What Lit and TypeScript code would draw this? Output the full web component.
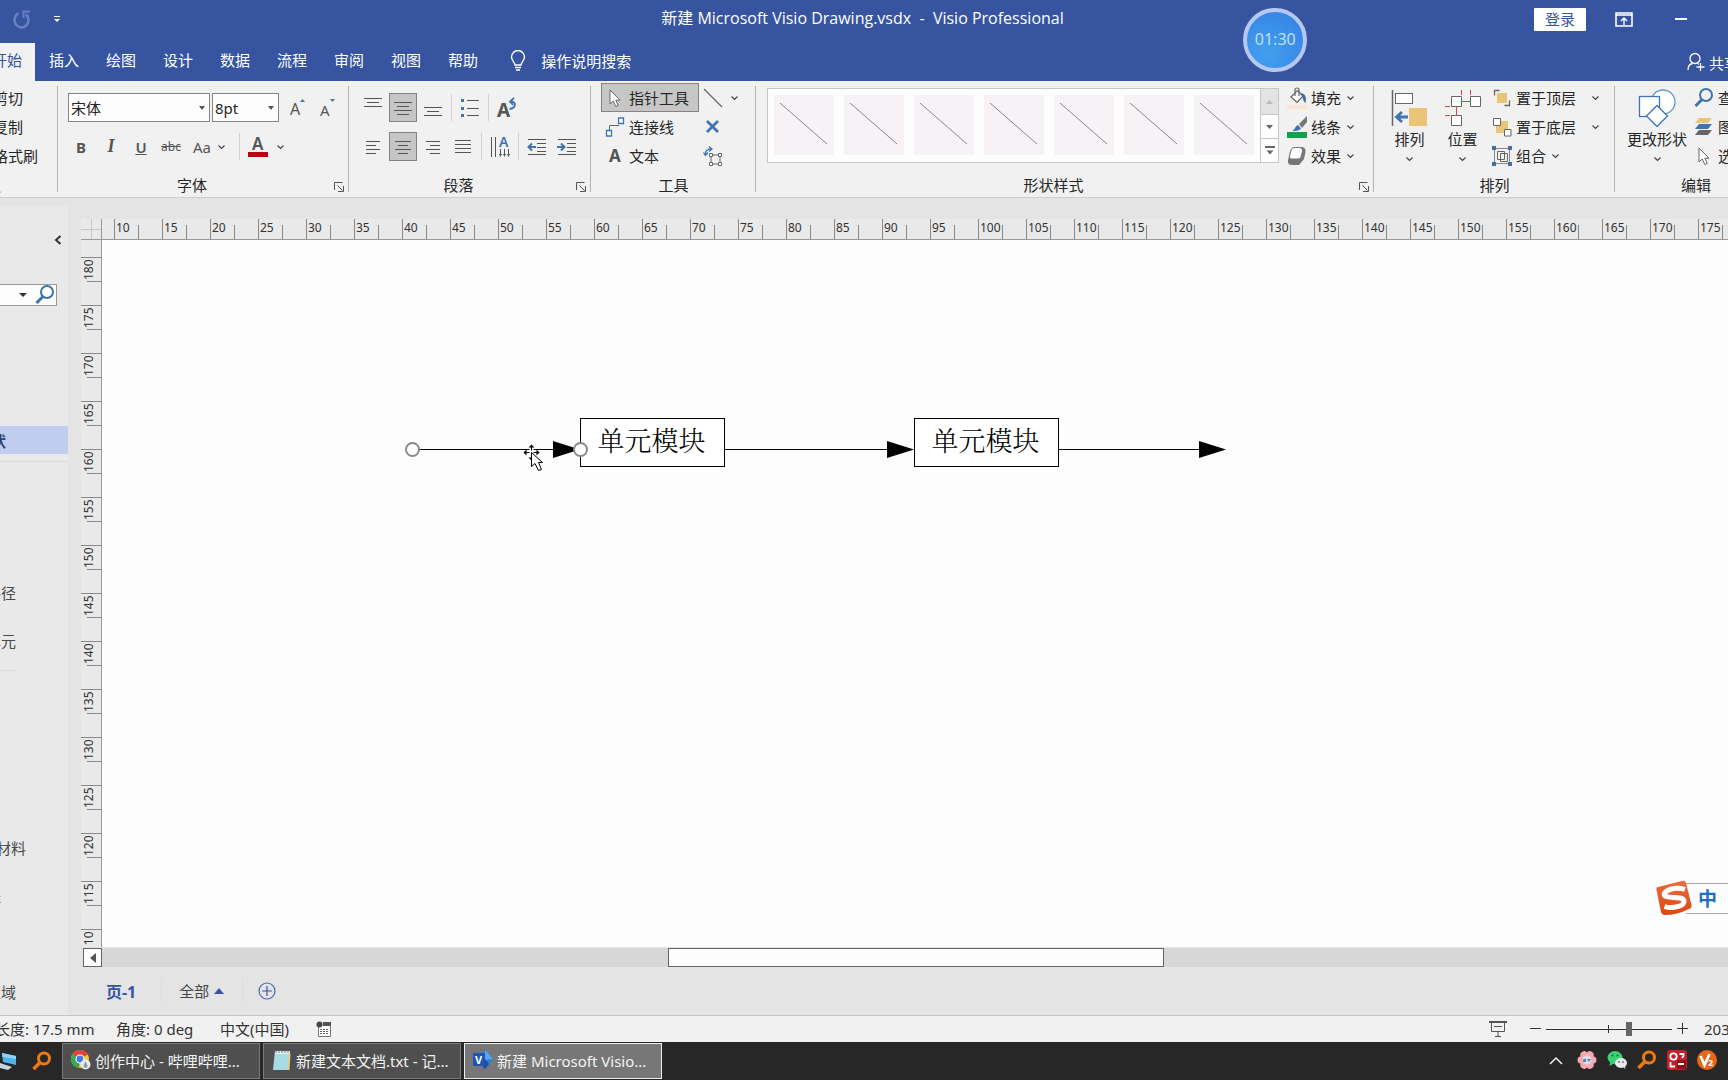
import { LitElement, html, css, svg } from "lit";
import { customElement, property } from "lit/decorators.js";

const chev = html`<svg class="chev" width="9" height="6" viewBox="0 0 9 6"><path d="M1.5 1.5 4.5 4.5 7.5 1.5" fill="none" stroke="#444" stroke-width="1.2"/></svg>`;

const lines = (rows: number[][]) =>
  svg`${rows.map(([x1, x2, y]) => svg`<path d="M${x1} ${y + 0.5}H${x2}" stroke="#555"/>`)}`;

const icon = (w: number, h: number, body: unknown) =>
  html`<svg width=${w} height=${h} viewBox="0 0 ${w} ${h}" aria-hidden="true">${body}</svg>`;

const searchPath = (c: string, w = 2) =>
  svg`<circle cx="12" cy="7" r="6" fill="none" stroke=${c} stroke-width=${w}/><path d="M8 11.5 1.5 18" stroke=${c} stroke-width=${w + 1}/>`;

const pointer = svg`<path d="M2 1V15L5.2 12 7.8 17.5 10.2 16.4 7.8 11.2H12Z" fill="#fff" stroke="#666"/>`;

const icons = {
  undo: icon(18, 20, svg`<path d="M5.5 4.2A7 7.5 0 1 0 13 5.2" fill="none" stroke="#6780c2" stroke-width="2.6"/><path d="M8 1.5H17V3.5H11.5V9H9.5V1.5" fill="#6780c2"/>`),
  custom: icon(8, 8, svg`<path d="M1 1.5H7" stroke="#fff"/><path d="M1 4H7L4 7Z" fill="#fff"/>`),
  bulb: icon(16, 22, svg`<path d="M5 15C5 12 1.5 11 1.5 7A6.3 6.3 0 0 1 14.5 7C14.5 11 11 12 11 15Z" fill="none" stroke="#fff" stroke-width="1.4"/><path d="M5 17.5H11M6 20H10" stroke="#fff" stroke-width="1.6"/>`),
  share: icon(18, 20, svg`<circle cx="8" cy="6.500" r="5" fill="none" stroke="#fff" stroke-width="1.3"/><path d="M1 18C1 14 3 12 5.500 11.500M10.500 11.500 12 12.300M13.500 11V19M9.500 15H17.500" fill="none" stroke="#fff" stroke-width="1.3"/>`),
  ribbonMode: icon(18, 15, svg`<path d="M1 1H17V14H1ZM1 3H17" fill="none" stroke="#fff" stroke-width="1.6"/><path d="M9 13V6M6 9 9 6 12 9" fill="none" stroke="#fff" stroke-width="1.4"/>`),
  launcher: icon(10, 10, svg`<path d="M.5 8V.5H8.500M3.500 3.500 8.500 8.500M9.500 4V9.500H4" fill="none" stroke="#555"/>`),
  grow: icon(16, 20, svg`<text x="0" y="17" font-size="16" fill="#555">A</text><path d="M10 4 12.500 1 15 4Z" fill="#3f74b0"/>`),
  shrink: icon(16, 20, svg`<text x="0" y="18" font-size="15" fill="#555">A</text><path d="M10 1H15L12.500 4Z" fill="#3f74b0"/>`),
  fontColor: icon(20, 22, svg`<text x="4" y="14" font-size="17" font-weight="600" fill="#555">A</text><rect y="16" width="20" height="5" fill="#b7060f"/>`),
  top: icon(18, 20, lines([[0, 18, 0], [3, 15, 4], [0, 18, 8]])),
  middle: icon(18, 20, lines([[0, 18, 4], [3, 15, 8], [0, 18, 12], [3, 15, 16]])),
  bottom: icon(18, 20, lines([[0, 18, 9], [3, 15, 13], [0, 18, 17]])),
  left: icon(16, 20, lines([[1, 15, 4], [1, 11, 8], [1, 15, 12], [1, 11, 16]])),
  center: icon(18, 20, lines([[1, 17, 4], [4, 14, 8], [1, 17, 12], [4, 14, 16]])),
  right: icon(16, 20, lines([[1, 15, 4], [5, 15, 8], [1, 15, 12], [5, 15, 16]])),
  justify: icon(18, 20, lines([[1, 17, 3], [1, 17, 7], [1, 17, 11], [1, 17, 15]])),
  bullets: icon(20, 20, svg`${lines([[7, 19, 2], [7, 19, 10], [7, 19, 17]])}<path d="M1 1H4V4H1ZM1 9H4V12H1ZM1 16H4V19H1Z" fill="#3f74b0"/>`),
  rotate: icon(20, 22, svg`<text x="0" y="20" font-size="19" font-weight="700" fill="#555">A</text><path d="M12.500 12C19 11 19.500 5.500 14.500 4.500M17 1 13 4.500 16 8" fill="none" stroke="#3f74b0" stroke-width="1.800"/>`),
  vertical: icon(20, 22, svg`<path d="M1.500 1V21M5.500 1V21M10.500 13V19M14.500 13V19M18.500 13V19" stroke="#555"/><path d="M9 18H12L10.500 21ZM13 18H16L14.500 21ZM17 18H20L18.500 21Z" fill="#555"/><text x="9" y="11" font-size="14" font-weight="600" fill="#3f74b0">A</text>`),
  outdent: icon(20, 20, svg`${lines([[1, 19, 2], [10, 19, 6], [10, 19, 10], [10, 19, 14], [1, 19, 17]])}<path d="M9 10H2M5 6.500 1.500 10 5 13.500" fill="none" stroke="#3f74b0" stroke-width="2"/>`),
  indent: icon(20, 20, svg`${lines([[1, 19, 2], [10, 19, 6], [10, 19, 10], [10, 19, 14], [1, 19, 17]])}<path d="M0 10H7M4 6.500 7.500 10 4 13.500" fill="none" stroke="#3f74b0" stroke-width="2"/>`),
  pointer: icon(20, 20, svg`<g transform="translate(3 1)">${pointer}</g>`),
  connector: icon(20, 20, svg`<path d="M4.500 13V8.500H14" fill="none" stroke="#666"/><path d="M1.500 13.500H6.500V19H1.500ZM13.500 1H18.500V6.500H13.500Z" fill="#fff" stroke="#3f74b0" stroke-width="1.300"/>`),
  text: icon(20, 20, svg`<text x="4" y="16" font-size="17" font-weight="700" fill="#555">A</text>`),
  line: icon(20, 20, svg`<path d="M1 1 19 19" stroke="#666" stroke-width="1.200"/>`),
  cross: icon(20, 20, svg`<path d="M4 4 15 15M15 4 4 15" stroke="#3f74b0" stroke-width="2.800"/>`),
  crop: icon(20, 20, svg`<path d="M8 9H17V18H8Z" fill="none" stroke="#666"/><path d="M6.500 7.500H9.500V10.500H6.500ZM15.500 7.500H18.500V10.500H15.500ZM6.500 16.500H9.500V19.500H6.500ZM15.500 16.500H18.500V19.500H15.500Z" fill="#fff" stroke="#666"/><path d="M2.500 9C2 5 4 3 8 3M6 .5 9 3 6 5.500M.5 6.500 2.500 9.500 5 6.500" fill="none" stroke="#3f74b0" stroke-width="1.300"/>`),
  fill: icon(20, 22, svg`<path d="M4 10 10.500 3.500 16 9 10 15.500Z" fill="#fff" stroke="#666" stroke-width="1.200"/><path d="M8 9V3A2 2 0 0 1 12 3V9" fill="none" stroke="#666" stroke-width="1.200"/><path d="M13 6C18 6 20 10 18.500 16 16 14.500 16 11 15 9Z" fill="#3f6f9f"/><rect y="18" width="20" height="4" fill="#fde4d0"/>`),
  stroke: icon(20, 22, svg`<path d="M20 0 12 8 15 12 20 6Z" fill="#777"/><path d="M11 9 14 12.500C12 15 8 15 5 15 8 14 8 10 11 9Z" fill="#3f74b0"/><rect y="16" width="20" height="6" fill="#12a14b"/>`),
  effect: icon(20, 20, svg`<path d="M6 1H14Q19 1 18.500 6L17 13 12 19H5Q0 19 1 14L3 6Z" fill="#777"/><path d="M7 1.500H13Q16 2 15.500 5L14 11Q13.500 13 11 13H4Q2 13 2.500 10L4 4Q4.500 2 7 1.500Z" fill="#fff" stroke="#777"/>`),
  align: icon(38, 38, svg`<path d="M1.500 1V37" stroke="#666" stroke-width="1.500"/><rect x="4.500" y="4.500" width="17" height="10" fill="#fff" stroke="#666"/><rect x="18" y="19" width="18" height="18" fill="#eac578"/><path d="M17 28H7M11 23 5.500 28 11 33" fill="none" stroke="#3f74b0" stroke-width="2.800"/>`),
  position: icon(38, 38, svg`<path d="M17.500 1V6M26.500 1V6M17 12.500H26M1 17.500H6M1 26.500H6M12.500 18V26" stroke="#d9434a"/><path d="M7.500 7.500H17.500V17.500H7.500ZM26.500 7.500H36.500V17.500H26.500ZM7.500 26.500H17.500V36.500H7.500Z" fill="#fff" stroke="#666"/>`),
  front: icon(20, 20, svg`<path d="M2.500 7.500V2.500H7.500M17.500 12.500V17.500H12.500" fill="none" stroke="#666" stroke-width="1.300"/><rect x="5" y="5" width="10" height="10" fill="#eac578"/>`),
  back: icon(20, 20, svg`<rect x="4" y="4" width="12" height="12" fill="#eac578"/><path d="M1.500 1.500H8.500V8.500H1.500ZM12.500 12.500H19V19H12.500Z" fill="#fff" stroke="#666"/>`),
  group: icon(20, 20, svg`<path d="M2.500 2.500H17.500V17.500H2.500Z" fill="none" stroke="#888"/><path d="M5.500 5.500H12.500V13.500H5.500ZM8.500 7.500H15.500V15.500H8.500Z" fill="none" stroke="#666"/><path d="M0 0H4V4H0ZM16 0H20V4H16ZM0 16H4V20H0ZM16 16H20V20H16Z" fill="#4a6f9c"/>`),
  change: icon(38, 38, svg`<circle cx="25" cy="13" r="12" fill="#fff" stroke="#6a9ac9" stroke-width="1.300"/><rect x="1.500" y="7.500" width="20" height="20" fill="#fff" stroke="#3f74b0" stroke-width="1.300"/><path d="M19 16.500 29.500 27 19 37.500 8.500 27Z" fill="#fff" stroke="#3f74b0" stroke-width="1.300"/>`),
  find: icon(20, 20, searchPath("#3f74a8", 2)),
  layers: icon(20, 20, svg`<path d="M5 1H18L14 6H1Z" fill="#eac578"/><path d="M5 7H18L14 12H1Z" fill="#3f74b0"/><path d="M5 13H18L14 18H1Z" fill="#666"/>`),
  present: icon(18, 18, svg`<path d="M0 2H18" stroke="#555" stroke-width="2"/><path d="M2.500 3V11.500H15.500V3M5 6.500H13M9 12V16M6 16.500H12" fill="none" stroke="#555"/>`),
  macro: icon(16, 16, svg`<path d="M2.500 4V15.500H14.500V4" fill="#fff" stroke="#777"/><rect x="7" y="1" width="8" height="4" fill="#555"/><circle cx="3.500" cy="3.500" r="3" fill="#444"/><path d="M4 8.500H13M4 10.500H13M4 12.500H13" stroke="#666" stroke-dasharray="2 1"/>`),
  orangeSearch: icon(20, 20, svg`<circle cx="12" cy="7.500" r="5.500" fill="none" stroke="#f07a12" stroke-width="3"/><path d="M8 11.500 1.500 18" stroke="#f07a12" stroke-width="3.500"/>`),
  computer: icon(20, 20, svg`<path d="M2 2 16 5V14L3 11Z" fill="#4fb4ea"/><path d="M2 2 16 5V8L2.500 6Z" fill="#8fd4f5"/><path d="M0 12 12 16 8 19 0 17Z" fill="#c9d6df"/>`),
  chrome: icon(20, 20, svg`<circle cx="9" cy="9" r="9" fill="#f7c52c"/><path d="M9 9 1.200 4.500A9 9 0 0 1 16.800 4.500Z" fill="#e24436"/><path d="M9 9 1.200 4.500A9 9 0 0 0 8 18Z" fill="#36a852"/><circle cx="9" cy="9" r="4.500" fill="#fff"/><circle cx="9" cy="9" r="3.400" fill="#3f7be8"/><circle cx="14.500" cy="14.500" r="5" fill="#e8ecee"/><path d="M14.500 11C13.500 14 12.500 14.500 12.500 16A2 2 0 0 0 16.500 16C16.500 14.500 15.500 14 14.500 11Z" fill="#8aa0ad"/>`),
  notepad: icon(20, 22, svg`<path d="M3 2H18L16 21H1Z" fill="#a9dbe4"/><path d="M3 2H18V5H3Z" fill="#e8eef0"/><path d="M4 1V4M7 1V4M10 1V4M13 1V4M16 1V4" stroke="#777"/><path d="M17 5 18.500 5 17.500 21 15 21Z" fill="#e6cd83"/>`),
  visio: icon(20, 22, svg`<path d="M12 1 20 10 12 20 4 10Z" fill="#2f7de0"/><path d="M12 1 20 10 12 11Z" fill="#55a6f5"/><path d="M4 10 12 20 16 15 12 10Z" fill="#174ea8"/><rect y="4" width="12" height="13" rx="1" fill="#1d55b4"/><text x="2" y="15" font-size="11" font-weight="700" fill="#fff">V</text>`),
  flower: icon(20, 20, svg`${[0, 60, 120, 180, 240, 300].map((a) => svg`<ellipse cx="10" cy="4.500" rx="3.800" ry="4" transform="rotate(${a + 30} 10 10)" fill="#f3aab1"/>`)}<circle cx="10" cy="10" r="4.500" fill="#e9d8ea"/><path d="M6 9.500 9 8.500V12H6ZM10 9H14L12 12Z" fill="#4d86c6"/>`),
  wechat: icon(20, 20, svg`<ellipse cx="8" cy="7.500" rx="7.500" ry="6.500" fill="#3bd072"/><path d="M3 12 2.500 16 7 13.500Z" fill="#3bd072"/><ellipse cx="14" cy="13" rx="6" ry="5" fill="#e6eae8"/><path d="M16 17 18.500 19 18 16Z" fill="#e6eae8"/><circle cx="5.500" cy="5.500" r="1" fill="#1a5c36"/><circle cx="10.500" cy="5.500" r="1" fill="#1a5c36"/><circle cx="12" cy="12" r="1" fill="#777"/><circle cx="16" cy="12" r="1" fill="#777"/>`),
  red: icon(20, 20, svg`<rect width="20" height="20" rx="3" fill="#c81e2b"/><rect x="10" y="10" width="9" height="9" fill="#8f0d18"/><circle cx="6.500" cy="6.500" r="3.200" fill="none" stroke="#fff" stroke-width="1.800"/><path d="M12.500 4H16.500V6L15 8M3.500 12V16.500H8M11 14H17" fill="none" stroke="#fff" stroke-width="1.800"/>`),
  v2: icon(20, 20, svg`<circle cx="10" cy="10" r="10" fill="#e8661a"/><path d="M3.500 6 7.500 15 12.500 4" fill="none" stroke="#fff" stroke-width="2.600"/><text x="11" y="16" font-size="9" font-weight="700" fill="#fff">2</text>`),
  sogou: icon(38, 36, svg`<defs><linearGradient id="sg" x1="0" y1="0" x2="0" y2="1"><stop offset="0" stop-color="#ee6a3f"/><stop offset="1" stop-color="#d94a12"/></linearGradient></defs><path d="M3 7Q1 7 1.500 10L6 32Q7 35 10 35 22 35 34 29 37 28 36.500 25L31 3Q30 0 27 1 15 4 3 7Z" fill="url(#sg)"/><path d="M30 9.500C20 6 7 11 9.500 15.500 12 19 27 15.500 29 20.500 30 26.500 17 29 9.500 26.500" fill="none" stroke="#fff" stroke-width="5"/>`),
};

const base = css`
  * { box-sizing: border-box; }
  button { font: inherit; color: inherit; background: none; border: 0; padding: 0; margin: 0; white-space: nowrap; }
  svg { display: block; flex: none; }
`;

@customElement("visio-title")
class VisioTitle extends LitElement {
  static styles = [base, css`
    :host { display: block; background: #36549f; color: #fff; position: relative; }
    .bar { display: flex; align-items: center; height: 38px; }
    .mini { display: flex; align-items: center; gap: 22px; flex: 1 1 0; padding-left: 13px; }
    .name { font-family: "Open Sans", "Noto Sans CJK SC", sans-serif; font-size: 16px; line-height: 20px; margin: 0; padding-bottom: 2px; font-weight: 400; white-space: pre; flex: none; }
    .right { flex: 1 1 0; display: flex; align-items: center; justify-content: flex-end; gap: 29px; padding-right: 16px; }
    .login { background: #fff; color: #36549f; width: 52px; height: 23px; line-height: 22px; border-radius: 1px; font-size: 15px; }
    .min { padding: 8px 25px 8px 13px; }
    .timer { position: absolute; left: 73.8%; top: 8px; margin-left: -32px; width: 64px; height: 64px; border-radius: 50%; border: 4px solid #b4c8f0; background: radial-gradient(circle at 35% 75%, #41a0ee, #357fe4); font-size: 16px; color: #c5dcf6; display: flex; align-items: center; justify-content: center; padding-bottom: 2px; }
    .tabs { display: flex; height: 43px; gap: 27px; padding-top: 5px; font-size: 15px; }
    .tab { height: 38px; padding-bottom: 6px; }
    .active { background: #f1f1f1; color: #36549f; width: 35px; margin-right: -13px; overflow: hidden; display: flex; align-items: center; }
    .active span { margin-left: -8px; }
    .tell { display: flex; align-items: center; gap: 15px; margin-left: 5px; padding-bottom: 3px; }
    .share { display: flex; align-items: center; gap: 4px; margin-left: auto; width: 41px; overflow: hidden; flex: none; }
  `];
  render() {
    return html`
      <div class="bar">
        <div class="mini"><button aria-label="重复">${icons.undo}</button><button aria-label="自定义">${icons.custom}</button></div>
        <h1 class="name">新建 Microsoft Visio Drawing.vsdx  -  Visio Professional</h1>
        <div class="right">
          <button class="login">登录</button>
          <button aria-label="功能区">${icons.ribbonMode}</button>
          <button class="min" aria-label="最小化">${icon(12, 2, svg`<rect width="12" height="2" fill="#fff"/>`)}</button>
        </div>
      </div>
      <nav class="tabs">
        <button class="tab active"><span>开始</span></button>
        ${["插入", "绘图", "设计", "数据", "流程", "审阅", "视图", "帮助"].map((t) => html`<button class="tab">${t}</button>`)}
        <button class="tell">${icons.bulb}操作说明搜索</button>
        <button class="share">${icons.share}共享</button>
      </nav>
      <div class="timer">01:30</div>
    `;
  }
}

@customElement("visio-ribbon")
class VisioRibbon extends LitElement {
  static styles = [base, css`
    :host { display: flex; height: 117px; background: #f1f1f1; border-bottom: 1px solid #cdcdcd; font-size: 15px; color: #262626; overflow: hidden; }
    .group { flex: none; display: grid; grid-template-rows: 87px 20px; padding: 2px 0 6px; position: relative; }
    .group::after { content: ""; width: 1px; background: #b4b4b4; position: absolute; right: 0; top: 5px; bottom: 5px; }
    .foot { display: flex; align-items: center; justify-content: center; padding-top: 2px; height: 28px; line-height: 20px; }
    .foot .cap { flex: 1; text-align: center; margin-right: 8px; }
    .foot.plain .cap { margin-right: 0; }
    .launch { padding: 4px 5px 0 0; }
    .clip { width: 58px; overflow: hidden; }
    .clip .col { margin-left: -7px; }
    .clip .foot { margin-left: -44px; justify-content: flex-start; }
    .clip .cap { text-align: left; }
    .col { display: grid; grid-template-rows: repeat(3, 29px); justify-items: start; }
    .item { display: flex; align-items: center; gap: 4px; height: 29px; }
    .item .chev { margin-left: 1px; }
    .font { width: 291px; }
    .para { width: 242px; }
    .tools { width: 165px; }
    .styles { flex: 1 0 618px; }
    .arrange { width: 241px; }
    .edit { width: 162px; }
    .rows { display: grid; grid-template-rows: 29px 29px; row-gap: 10px; padding: 10px 0 0 10px; }
    .para .rows { padding-left: 9px; }
    .row { display: flex; align-items: center; }
    .chars { margin-left: -2px; }
    .box { display: flex; position: relative; height: 29px; }
    select { appearance: none; font: inherit; color: inherit; border: 1px solid #858585; border-radius: 0; background: #fdfdfd; height: 29px; width: 100%; padding: 0 0 0 2px; margin: 0; }
    .face { width: 142px; }
    .size { width: 67px; margin: 0 4px 0 2px; }
    .box::after { content: ""; position: absolute; right: 5px; top: 13px; border: 3px solid transparent; border-top: 4px solid #555; border-bottom: 0; }
    .b { width: 30px; height: 29px; display: flex; align-items: center; justify-content: center; color: #555; }
    .on { background: #c6c6c6; border: 1px solid #8a8082; width: 28px; margin: 0 1px; }
    .sep { width: 1px; height: 27px; background: #d2d2d2; margin: 0 3px; }
    .bold { font-weight: 700; }
    .ital { font-family: "Liberation Serif", serif; font-style: italic; font-weight: 700; font-size: 18px; }
    .under { text-decoration: underline; font-weight: 600; }
    .strike { text-decoration: line-through; font-size: 12px; }
    .case { gap: 6px; width: 50px; justify-content: flex-start; padding-left: 7px; }
    .color { gap: 8px; width: 48px; justify-content: flex-start; padding-left: 5px; }
    .toolgrid { display: grid; grid-template-columns: 98px 1fr; grid-template-rows: repeat(3, 29px); padding-left: 10px; }
    .toolgrid .item { padding-left: 4px; }
    .toolgrid .alt { gap: 6px; }
    .item.press { background: #c6c6c6; border: 1px solid #8a8082; padding-left: 3px; width: 98px; }
    .stylebar { display: flex; padding-left: 11px; }
    .gallery { display: flex; gap: 10px; flex: 1; background: #fdfdfd; border: 1px solid #c6c6c6; height: 75px; margin-top: 5px; padding: 6px; }
    .cell { flex: 1; height: 60px; background: #f6f2f6; display: flex; align-items: center; justify-content: center; }
    .spin { display: grid; grid-template-rows: 27px 24px 24px; width: 19px; margin: 5px 8px 0 -1px; }
    .spin button { border: 1px solid #c6c6c6; background: #fdfdfd; display: flex; align-items: center; justify-content: center; margin-top: -1px; }
    .spin button:first-child { background: #e3e3e3; margin: 0; }
    .effects { width: 87px; }
    .bigs { display: flex; }
    .big { display: flex; flex-direction: column; align-items: center; height: 87px; padding-top: 6px; line-height: 24px; width: 53px; }
    .big .chev { margin-top: 5px; }
    .arrange .bigs { padding-left: 9px; }
    .arrange .col { margin-left: 3px; }
    .item.wide .chev { margin-left: 11px; }
    .edit .big { width: 62px; margin-left: 11px; }
    .edit .col { margin-left: 6px; }
  `];
  private foot(label: string, launch = false) {
    return html`<div class="foot ${launch ? "" : "plain"}"><span class="cap">${label}</span>${launch ? html`<button class="launch" aria-label="${label}设置">${icons.launcher}</button>` : ""}</div>`;
  }
  private b(label: string, body: unknown, cls = "") {
    return html`<button class="b ${cls}" aria-label=${label}>${body}</button>`;
  }
  render() {
    return html`
      <section class="group clip">
        <div class="col">${["剪切", "复制", "格式刷"].map((t) => html`<button class="item">${t}</button>`)}</div>
        ${this.foot("剪贴板")}
      </section>
      <section class="group font">
        <div class="rows">
          <div class="row">
            <label class="box face"><select aria-label="字体"><option>宋体</option></select></label>
            <label class="box size"><select aria-label="字号"><option>8pt</option></select></label>
            ${this.b("增大字号", icons.grow)}${this.b("减小字号", icons.shrink)}
          </div>
          <div class="row chars">
            ${this.b("加粗", "B", "bold")}${this.b("倾斜", "I", "ital")}${this.b("下划线", "U", "under")}${this.b("删除线", "abc", "strike")}
            ${this.b("更改大小写", html`Aa${chev}`, "case")}<span class="sep"></span>${this.b("字体颜色", html`${icons.fontColor}${chev}`, "color")}
          </div>
        </div>
        ${this.foot("字体", true)}
      </section>
      <section class="group para">
        <div class="rows">
          <div class="row">
            ${this.b("顶端对齐", icons.top)}${this.b("中部对齐", icons.middle, "on")}${this.b("底端对齐", icons.bottom)}<span class="sep"></span>
            ${this.b("项目符号", icons.bullets)}<span class="sep"></span>${this.b("旋转文本", icons.rotate)}
          </div>
          <div class="row">
            ${this.b("左对齐", icons.left)}${this.b("居中", icons.center, "on")}${this.b("右对齐", icons.right)}${this.b("两端对齐", icons.justify)}<span class="sep"></span>
            ${this.b("文字方向", icons.vertical)}<span class="sep"></span>${this.b("减少缩进", icons.outdent)}${this.b("增加缩进", icons.indent)}
          </div>
        </div>
        ${this.foot("段落", true)}
      </section>
      <section class="group tools">
        <div class="toolgrid">
          <button class="item press">${icons.pointer}指针工具</button><button class="item alt" aria-label="线条">${icons.line}${chev}</button>
          <button class="item">${icons.connector}连接线</button><button class="item alt" aria-label="连接点">${icons.cross}</button>
          <button class="item">${icons.text}文本</button><button class="item alt" aria-label="文本块">${icons.crop}</button>
        </div>
        ${this.foot("工具")}
      </section>
      <section class="group styles">
        <div class="stylebar">
          <div class="gallery">
            ${[1, 2, 3, 4, 5, 6, 7].map((n) => html`<button class="cell" aria-label="样式 ${n}">${icon(50, 44, svg`<path d="M1 0 48 41" stroke="#8c868c"/>`)}</button>`)}
          </div>
          <div class="spin">
            <button aria-label="上一行">${icon(7, 4, svg`<path d="M0 4H7L3.500 0Z" fill="#bbb"/>`)}</button>
            <button aria-label="下一行">${icon(7, 4, svg`<path d="M0 0H7L3.500 4Z" fill="#666"/>`)}</button>
            <button aria-label="其他">${icon(10, 9, svg`<path d="M0 1H10" stroke="#666" stroke-width="2"/><path d="M1.500 4.500H8.500L5 8.500Z" fill="#666"/>`)}</button>
          </div>
          <div class="col effects">
            <button class="item">${icons.fill}填充${chev}</button>
            <button class="item">${icons.stroke}线条${chev}</button>
            <button class="item">${icons.effect}效果${chev}</button>
          </div>
        </div>
        ${this.foot("形状样式", true)}
      </section>
      <section class="group arrange">
        <div class="bigs">
          <button class="big">${icons.align}<span>排列</span>${chev}</button>
          <button class="big">${icons.position}<span>位置</span>${chev}</button>
          <div class="col">
            <button class="item wide">${icons.front}置于顶层${chev}</button>
            <button class="item wide">${icons.back}置于底层${chev}</button>
            <button class="item">${icons.group}组合${chev}</button>
          </div>
        </div>
        ${this.foot("排列")}
      </section>
      <section class="group edit">
        <div class="bigs">
          <button class="big">${icons.change}<span>更改形状</span>${chev}</button>
          <div class="col">
            <button class="item">${icons.find}查找</button>
            <button class="item">${icons.layers}图层</button>
            <button class="item">${icons.pointer}选择</button>
          </div>
        </div>
        ${this.foot("编辑")}
      </section>
    `;
  }
}

@customElement("shape-pane")
class ShapePane extends LitElement {
  static styles = [base, css`
    :host { display: flex; flex-direction: column; background: #e9e9e9; margin-top: 8px; font-size: 15px; color: #4a4a4a; overflow: hidden; }
    .fold { align-self: flex-end; padding: 29px 6px 0 0; }
    .search { display: flex; align-items: center; height: 24px; margin: 39px 11px 0 -1px; background: #fdfdfd; border: 1px solid #9a9a9a; padding-right: 1px; }
    .search input { flex: 1; min-width: 0; width: 0; border: 0; background: none; outline: 0; }
    .search button { margin-left: 8px; }
    .caret { border: 4px solid transparent; border-top: 4px solid #333; border-bottom: 0; }
    .picked { height: 31px; margin-top: 120px; background: #c0cdef; color: #34446c; font-weight: 700; text-align: left; }
    .shift { margin-left: -9px; }
    .rule { height: 1px; background: #dcdcdc; margin-top: 7px; }
    .rule.short { width: 17px; margin-top: 6px; }
    .list { display: flex; flex-direction: column; }
    .first { margin-top: 106px; }
    .second { margin-top: 152px; }
    .entry { height: 48px; display: flex; align-items: center; }
    .entry span { margin-left: -14px; }
    .entry .near { margin-left: -4px; }
  `];
  render() {
    return html`
      <button class="fold" aria-label="折叠">${icon(8, 10, svg`<path d="M6.500 1 2 5 6.500 9" fill="none" stroke="#333" stroke-width="2"/>`)}</button>
      <div class="search"><input aria-label="搜索形状" /><span class="caret"></span><button aria-label="搜索">${icon(20, 20, searchPath("#3f74a8", 2))}</button></div>
      <button class="picked"><span class="shift">状</span></button>
      <div class="rule"></div>
      <div class="list first">
        <button class="entry"><span>路径</span></button>
        <button class="entry"><span>单元</span></button>
      </div>
      <div class="rule short"></div>
      <div class="list second">
        <button class="entry"><span class="near">材料</span></button>
        <button class="entry"><span>程</span></button>
        <span class="entry"></span>
        <button class="entry"><span>区域</span></button>
      </div>
    `;
  }
}

@customElement("ruler-strip")
class RulerStrip extends LitElement {
  @property() dir = "h";
  @property({ type: Number }) from = 0;
  @property({ type: Number }) step = 5;
  @property({ type: Number }) count = 10;
  static styles = [base, css`
    :host { display: block; overflow: hidden; font-size: 12px; color: #333; background: #e9e9e9; }
    .h, .v { display: flex; }
    .v { flex-direction: column; }
    .h { padding-left: 12px; height: 21px; border-bottom: 1px solid #999; width: max-content; min-width: 100%; }
    .v { padding-top: 17px; width: 21px; border-right: 1px solid #999; min-height: 100%; }
    .h .mark { width: 48px; height: 20px; flex: none; border-left: 1px solid #888; padding-left: 1px; line-height: 17px; background: linear-gradient(#888, #888) 23px 100% / 1px 14px no-repeat; }
    .v .mark { height: 48px; width: 20px; flex: none; border-top: 1px solid #888; background: linear-gradient(#888, #888) 100% 23px / 14px 1px no-repeat; }
    .v span { writing-mode: vertical-rl; transform: rotate(180deg); display: block; line-height: 16px; width: 16px; height: 21px; margin-top: 1px; text-align: right; }
  `];
  render() {
    const marks = Array.from({ length: this.count }, (_, i) => this.from + i * this.step);
    return html`<div class=${this.dir}>${marks.map((m) => html`<div class="mark"><span>${m}</span></div>`)}</div>`;
  }
}

@customElement("drawing-area")
class DrawingArea extends LitElement {
  static styles = [base, css`
    :host { display: grid; grid-template-columns: 21px 1fr; grid-template-rows: 21px 1fr 20px 48px; margin: 21px 0 0 13px; overflow: hidden; min-width: 0; }
    .corner { border-right: 1px solid #999; border-bottom: 1px solid #999; background: linear-gradient(#c8c8c8, #c8c8c8) 10px 0 / 1px 100% no-repeat, linear-gradient(#c8c8c8, #c8c8c8) 0 10px / 100% 1px no-repeat, #e9e9e9; }
    .page { background: #fdfdfd; position: relative; overflow: hidden; min-height: 0; }
    .diagram { position: absolute; left: 0; top: 0; }
    .label { font-family: "Noto Serif CJK SC", "Noto Sans CJK SC", serif; font-weight: 300; font-size: 27px; }
    .ime { position: absolute; right: 0; bottom: 32px; display: flex; align-items: center; height: 34px; width: 73px; }
    .ime .tray { flex: 1; height: 31px; margin-left: -7px; border: 1px solid #aaa; border-width: 1px 0; background: #fdfdfd; color: #1f6fc0; font-weight: 700; font-size: 19px; line-height: 31px; padding-left: 12px; }
    .ime svg { position: relative; }
    .scroll { grid-column: 1 / 3; display: flex; padding: 1px 0 0 2px; }
    .back { width: 19px; height: 19px; border: 1px solid #666; background: #fdfdfd; display: flex; align-items: center; justify-content: center; }
    .track { flex: 1; background: #d7d7d7; display: grid; grid-template-columns: 566fr 496fr 564fr; }
    .thumb { grid-column: 2; height: 19px; background: #fdfdfd; border: 1px solid #666; }
    .pages { grid-column: 1 / 3; display: flex; align-items: center; font-size: 15px; color: #444; padding: 0 0 1px 25px; }
    .current { color: #36549f; font-weight: 700; font-size: 16px; padding-right: 25px; }
    .bar { width: 1px; height: 24px; background: #dcdcdc; }
    .all { display: flex; align-items: center; gap: 5px; padding: 0 18px 0 17px; }
    .add { margin-left: 15px; }
  `];
  render() {
    const box = (x: number) => svg`<rect x=${x} y="178.500" width="144" height="48" fill="#fff" stroke="#000"/><text class="label" x=${x + 17} y="211">单元模块</text>`;
    const arrow = (x: number, tip: number) => svg`<path d="M${x} 209.500H${tip - 20}" stroke="#000"/><path d="M${tip} 209.500 ${tip - 27} 201V218Z"/>`;
    return html`
      <div class="corner"></div>
      <ruler-strip dir="h" from="10" step="5" count="40"></ruler-strip>
      <ruler-strip dir="v" from="180" step="-5" count="15"></ruler-strip>
      <div class="page">
        <svg class="diagram" width="1400" height="400" viewBox="0 0 1400 400">
          ${arrow(310, 478)}${arrow(623, 812)}${arrow(957, 1124)}${box(478.5)}${box(812.5)}
          <circle cx="310.500" cy="209.500" r="6.500" fill="#fff" stroke="#8a8a8a" stroke-width="2"/>
          <circle cx="478.500" cy="209.500" r="6.500" fill="#fff" stroke="#8a8a8a" stroke-width="2"/>
          <g transform="translate(429.500 212.500)">
            <path d="M-8 0H8M0-8V8" stroke="#fff" stroke-width="4"/>
            <path d="M-7 0H7M0-7V7" stroke="#000" stroke-dasharray="5 4"/>
            <path d="M-8 0-5-3V3ZM8 0 5-3V3ZM0-8-3-5H3ZM0 8-3 5H3Z"/>
            <path d="M0 0V14L3.500 11 7 18 10 17 7 10H11Z" fill="#fff" stroke="#000"/>
          </g>
        </svg>
        <div class="ime">${icons.sogou}<span class="tray">中</span></div>
      </div>
      <div class="scroll">
        <button class="back" aria-label="向左">${icon(6, 10, svg`<path d="M6 0V10L0 5Z" fill="#555"/>`)}</button>
        <div class="track"><div class="thumb"></div></div>
      </div>
      <div class="pages">
        <button class="current">页-1</button><span class="bar"></span>
        <button class="all">全部${icon(10, 6, svg`<path d="M0 6H10L5 0Z" fill="#36549f"/>`)}</button><span class="bar"></span>
        <button class="add" aria-label="插入页">${icon(18, 18, svg`<circle cx="9" cy="9" r="8" fill="none" stroke="#4a66b0" stroke-width="1.200"/><path d="M4 9H14M9 4V14" stroke="#36549f" stroke-width="1.200"/>`)}</button>
      </div>
    `;
  }
}

@customElement("status-bar")
class StatusBar extends LitElement {
  static styles = [base, css`
    :host { display: flex; align-items: center; height: 27px; background: #f1f1f1; border-top: 1px solid #c3c3c3; font-size: 15px; line-height: 20px; color: #333; white-space: nowrap; overflow: hidden; padding-bottom: 1px; }
    .len { margin-left: -5px; width: 121px; }
    .ang { width: 104px; }
    .lang { width: 96px; }
    .right { margin-left: auto; display: flex; align-items: center; flex: none; }
    .zoom { display: flex; align-items: center; gap: 5px; margin: 0 16px 0 23px; }
    input { appearance: none; width: 126px; height: 14px; margin: 0; background: linear-gradient(#333, #333) 62px 3px / 1px 8px no-repeat, linear-gradient(#333, #333) 0 7px / 100% 1px no-repeat; }
    input::-webkit-slider-thumb { appearance: none; width: 6px; height: 14px; background: #666; }
    .pct { width: 24px; overflow: hidden; }
  `];
  render() {
    return html`
      <span class="len">长度: 17.5 mm</span><span class="ang">角度: 0 deg</span><span class="lang">中文(中国)</span>
      <button aria-label="宏">${icons.macro}</button>
      <div class="right">
        <button aria-label="演示模式">${icons.present}</button>
        <div class="zoom">
          <button aria-label="缩小">${icon(11, 11, svg`<path d="M0 5.500H11" stroke="#333"/>`)}</button>
          <input type="range" aria-label="缩放" min="0" max="100" value="67" />
          <button aria-label="放大">${icon(11, 11, svg`<path d="M0 5.500H11M5.500 0V11" stroke="#333"/>`)}</button>
        </div>
        <button class="pct">203%</button>
      </div>
    `;
  }
}

@customElement("task-bar")
class TaskBar extends LitElement {
  static styles = [base, css`
    :host { display: flex; align-items: center; height: 38px; background: #272727; color: #f4f4f4; font-size: 15px; overflow: hidden; }
    .pin { margin-right: 12px; }
    .find { margin-right: 10px; }
    .task { width: 198px; height: 36px; display: flex; align-items: center; gap: 4px; padding: 0 0 2px 8px; border: 1px solid #7a7a7a; background: #4f4f4f; margin-right: 3px; }
    .active { background: #777; border-color: #eee; }
    .tray { margin-left: auto; display: flex; align-items: center; gap: 10px; padding: 0 11px 2px 0; }
    .up { margin-right: 4px; }
  `];
  render() {
    return html`
      <button class="pin" aria-label="电脑">${icons.computer}</button>
      <button class="find" aria-label="查找">${icons.orangeSearch}</button>
      <button class="task">${icons.chrome}创作中心 - 哔哩哔哩...</button>
      <button class="task">${icons.notepad}新建文本文档.txt - 记...</button>
      <button class="task active">${icons.visio}新建 Microsoft Visio...</button>
      <div class="tray">
        <button class="up" aria-label="展开">${icon(14, 9, svg`<path d="M1 8 7 2 13 8" fill="none" stroke="#eee" stroke-width="1.500"/>`)}</button>
        ${[icons.flower, icons.wechat, icons.orangeSearch, icons.red, icons.v2].map((i, n) => html`<button aria-label="托盘 ${n + 1}">${i}</button>`)}
      </div>
    `;
  }
}

@customElement("app-root")
class AppRoot extends LitElement {
  static styles = [base, css`
    :host { display: grid; grid-template-rows: auto auto 1fr auto auto; height: 100vh; overflow: hidden; background: #e4e4e4; font-family: "Noto Sans", "Noto Sans CJK SC", sans-serif; }
    .main { display: grid; grid-template-columns: 68px 1fr; min-height: 0; }
  `];
  render() {
    return html`
      <visio-title></visio-title>
      <visio-ribbon></visio-ribbon>
      <div class="main"><shape-pane></shape-pane><drawing-area></drawing-area></div>
      <status-bar></status-bar>
      <task-bar></task-bar>
    `;
  }
}
